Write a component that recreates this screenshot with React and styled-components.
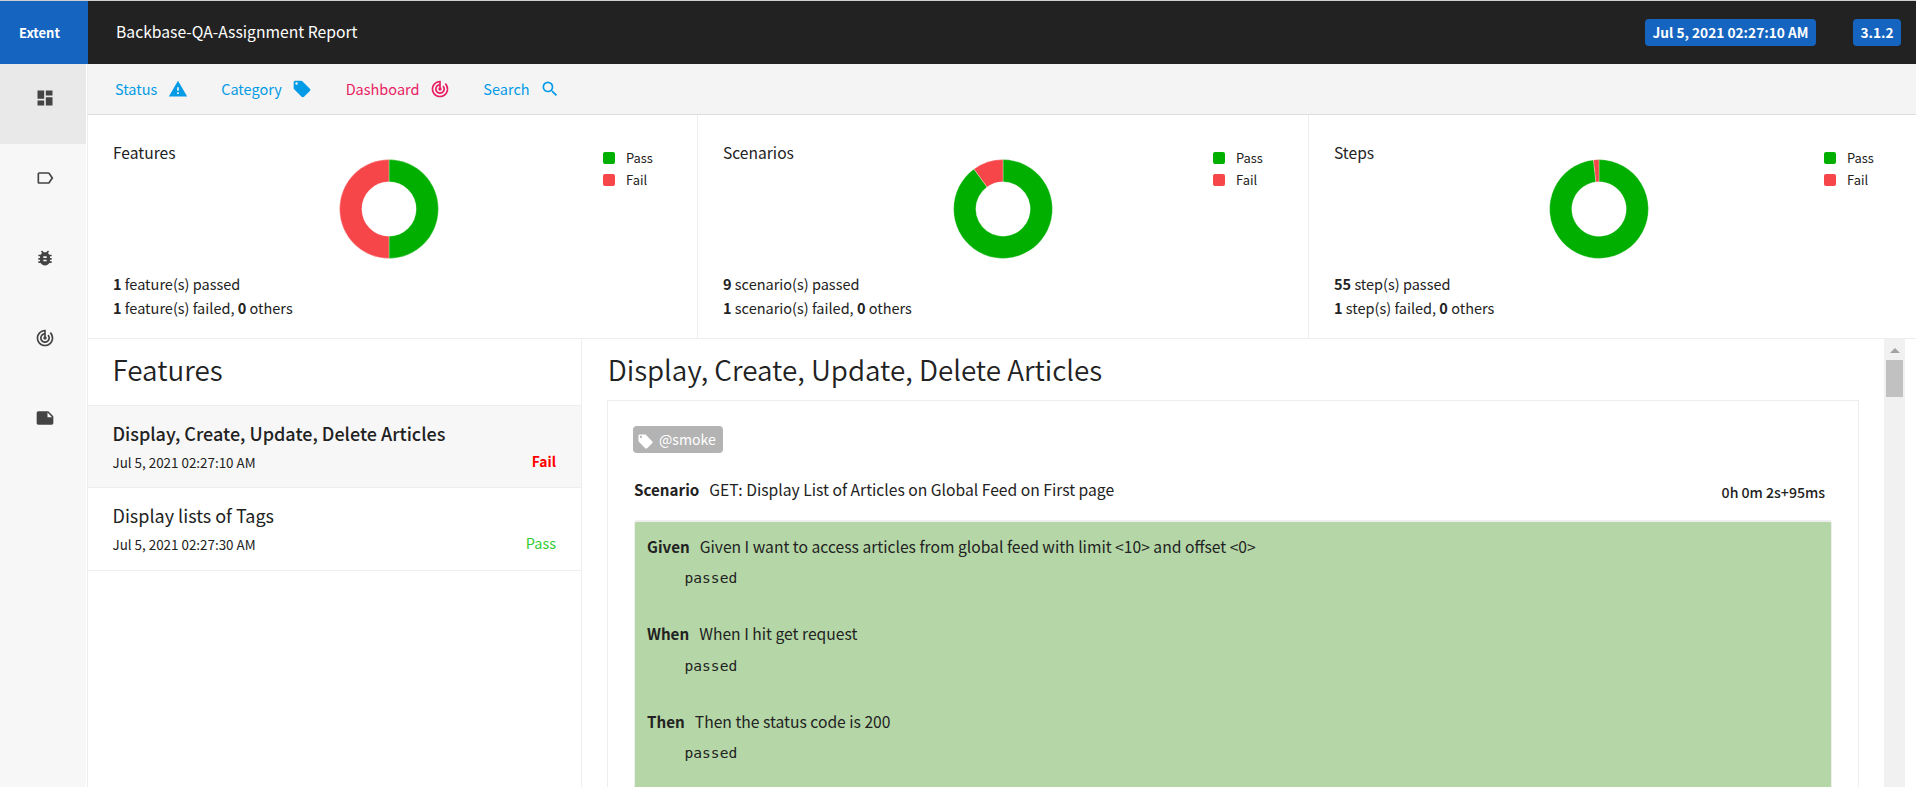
import React from "react";
import styled, { createGlobalStyle } from "styled-components";
import {
  MdDashboard,
  MdLabelOutline,
  MdBugReport,
  MdTrackChanges,
  MdNote,
  MdWarning,
  MdLocalOffer,
  MdSearch,
} from "react-icons/md";

const GlobalStyle = createGlobalStyle`
  *, *::before, *::after { box-sizing: border-box; }
  html, body { margin: 0; padding: 0; height: 100%; overflow: hidden; }
  body {
    background: #fff;
    color: #222;
    font-family: "Noto Sans CJK SC", "Noto Sans", sans-serif;
    font-size: 14px;
    white-space: nowrap;
  }
`;

const Page = styled.div`
  display: flex;
  flex-direction: column;
  width: 1916px;
  height: 787px;
  overflow: hidden;
`;

const Header = styled.header`
  display: flex;
  flex: none;
  height: 64px;
  border-top: 1px solid #cdd0cf;
  background: #222;
  color: #fff;
`;

const Brand = styled.div`
  width: 88px;
  padding: 19px 0 0 19px;
  background: #1565c0;
  font-size: 13px;
  font-weight: 700;
  line-height: 26px;
`;

const ReportName = styled.div`
  flex: 1;
  padding: 19px 0 0 28px;
  font-size: 15.7px;
  line-height: 24px;
`;

const Badge = styled.span`
  align-self: flex-start;
  height: 27px;
  margin-top: 18px;
  margin-right: ${(p) => p.$after}px;
  padding: 0 7.5px;
  border-radius: 4px;
  background: #1565c0;
  font-size: 13.7px;
  font-weight: 700;
  line-height: 26px;
`;

const Body = styled.div`
  display: flex;
  flex: 1;
  min-height: 0;
`;

const Sidebar = styled.aside`
  flex: none;
  width: 87px;
  border-right: 1px solid #fff;
  background: #f7f7f7;
`;

const SideItem = styled.div`
  display: flex;
  justify-content: center;
  height: 80px;
  padding: 24px 0 0 4px;
  background: ${(p) => (p.$active ? "#e9e9e9" : "transparent")};
  color: #444;
  font-size: 20px;
`;

const Main = styled.main`
  display: flex;
  flex: 1;
  flex-direction: column;
  min-width: 0;
`;

const Toolbar = styled.nav`
  display: flex;
  flex: none;
  gap: 33.5px;
  height: 51px;
  padding-left: 27px;
  border-bottom: 1px solid #ddd;
  border-left: 1px solid #eee;
  background: #f4f4f4;
`;

const ToolLink = styled.a`
  display: flex;
  align-items: center;
  gap: 10.3px;
  padding-bottom: 2px;
  color: ${(p) => (p.$active ? "#e91e63" : "#039be5")};
  font-size: 14.5px;

  svg { margin-top: 1px; font-size: 20px; }
`;

const Cards = styled.section`
  display: grid;
  flex: none;
  grid-template-columns: 610px 611px 1fr;
  height: 224px;
  border-bottom: 1px solid #eee;
`;

const Card = styled.div`
  padding: 28px 0 0 25px;
  border-left: 1px solid #eee;
`;

const CardTop = styled.div`
  display: flex;
  width: 566px;
  height: 129px;
`;

const CardTitle = styled.div`
  font-size: 15.6px;
  line-height: 18px;
`;

const ChartArea = styled.div`
  display: flex;
  flex: 1;
  justify-content: center;
  padding-top: 16px;
`;

const Legend = styled.div`
  width: 76px;
  padding-top: 4px;
`;

const LegendRow = styled.div`
  display: flex;
  align-items: center;
  gap: 11px;
  height: 22px;
  font-size: 12.9px;
  line-height: 20px;

  &::before {
    content: "";
    width: 12px;
    height: 12px;
    border-radius: 2px;
    background: ${(p) => p.$color};
  }
`;

const Stat = styled.div`
  font-size: 14.5px;
  line-height: 24px;
`;

const Content = styled.div`
  display: flex;
  flex: 1;
  min-height: 0;
`;

const FeatureList = styled.section`
  flex: none;
  width: 495px;
  border-right: 1px solid #eee;
  border-left: 1px solid #eee;
`;

const ListHeading = styled.h1`
  height: 67px;
  margin: 0;
  padding: 12px 0 0 24.5px;
  border-bottom: 1px solid #eee;
  font-size: 27.8px;
  font-weight: 350;
  line-height: 36px;
`;

const Feature = styled.div`
  height: ${(p) => (p.$active ? 82 : 83)}px;
  padding: 14.5px 25px 0 24.5px;
  border-bottom: 1px solid #eee;
  background: ${(p) => (p.$active ? "#f7f7f7" : "#fff")};
`;

const FeatureName = styled.div`
  font-size: 18px;
  font-weight: ${(p) => (p.$active ? 500 : 400)};
  line-height: 24px;
`;

const FeatureMeta = styled.div`
  display: flex;
  justify-content: space-between;
  padding-top: 7px;
  line-height: 20px;
  font-size: 13.4px;
`;

const Outcome = styled.span`
  color: ${(p) => (p.$failed ? "#f00" : "#32cd32")};
  font-size: ${(p) => (p.$failed ? 13.8 : 14.5)}px;
  font-weight: ${(p) => (p.$failed ? 700 : 400)};
  line-height: ${(p) => (p.$failed ? 19 : 18)}px;
`;

const Detail = styled.section`
  flex: 1;
  min-width: 0;
  padding: 12px 25px 0 25px;
  overflow: hidden;
`;

const DetailHeading = styled.h2`
  height: 49px;
  margin: 0;
  padding-left: 0.7px;
  font-size: 27.8px;
  font-weight: 350;
  line-height: 36px;
`;

const Panel = styled.div`
  height: 600px;
  padding: 25px 26px 0 25px;
  border: 1px solid #eee;
`;

const Tag = styled.div`
  display: flex;
  align-items: center;
  gap: 5px;
  width: fit-content;
  height: 27px;
  padding: 0 7px 0 4px;
  border-radius: 4px;
  background: #b3b3b3;
  color: #fff;
  font-size: 14.1px;
  line-height: 25px;

  svg { margin-top: 3px; font-size: 17px; }
`;

const ScenarioRow = styled.div`
  display: flex;
  justify-content: space-between;
  height: 67px;
  padding: 23.5px 7px 0 1px;
  font-size: 15.66px;
  line-height: 24px;
`;

const Keyword = styled.span`
  margin-right: 10px;
  font-size: 15.2px;
  font-weight: 700;
`;

const Duration = styled.span`
  padding-top: 3.5px;
  font-size: 14.1px;
  font-weight: 500;
`;

const Steps = styled.div`
  height: 500px;
  margin-left: 1px;
  padding: 11.8px 12px 0;
  border: 1px solid #eee;
  border-top-width: 2px;
  border-radius: 3px;
  background: #b5d7a7;
`;

const Step = styled.div`
  height: 87.5px;
  font-size: 15.66px;
  line-height: 24px;
`;

const StepLog = styled.pre`
  margin: 7.5px 0 0 37.5px;
  font-family: "DejaVu Sans Mono", monospace;
  font-size: 14.6px;
  line-height: 24px;
`;

const ScrollTrack = styled.div`
  display: flex;
  flex: none;
  flex-direction: column;
  align-items: center;
  width: 21px;
  margin-right: 11px;
  background: #f1f1f1;
`;

const ScrollArrow = styled.div`
  margin: 9px 0 7px;
  border: 5px solid transparent;
  border-top-width: 0;
  border-bottom-color: #a3a3a3;
`;

const ScrollThumb = styled.div`
  width: 17px;
  height: 37px;
  background: #c1c1c1;
`;

const PASS = "#00af00";
const FAIL = "#f7464a";

function Donut({ passed, failed }) {
  const c = 50;
  const R = 49.4;
  const r = 27.2;
  const split = (passed / (passed + failed)) * Math.PI * 2;
  const at = (radius, a) => `${c + radius * Math.sin(a)} ${c - radius * Math.cos(a)}`;
  const slice = (from, to) => {
    const large = to - from > Math.PI ? 1 : 0;
    return `M${at(R, from)}A${R} ${R} 0 ${large} 1 ${at(R, to)}L${at(r, to)}A${r} ${r} 0 ${large} 0 ${at(r, from)}Z`;
  };
  return (
    <svg width="100" height="100" viewBox="0 0 100 100">
      <path d={slice(0, split)} fill={PASS} stroke="#fff" strokeWidth="0.3" />
      <path d={slice(split, Math.PI * 2)} fill={FAIL} stroke="#fff" strokeWidth="0.3" />
    </svg>
  );
}

const sideIcons = [MdDashboard, MdLabelOutline, MdBugReport, MdTrackChanges, MdNote];

const tools = [
  { label: "Status", Icon: MdWarning },
  { label: "Category", Icon: MdLocalOffer },
  { label: "Dashboard", Icon: MdTrackChanges, active: true },
  { label: "Search", Icon: MdSearch },
];

const summaries = [
  { title: "Features", unit: "feature(s)", passed: 1, failed: 1 },
  { title: "Scenarios", unit: "scenario(s)", passed: 9, failed: 1 },
  { title: "Steps", unit: "step(s)", passed: 55, failed: 1 },
];

const features = [
  { name: "Display, Create, Update, Delete Articles", time: "Jul 5, 2021 02:27:10 AM", outcome: "Fail", active: true },
  { name: "Display lists of Tags", time: "Jul 5, 2021 02:27:30 AM", outcome: "Pass" },
];

const steps = [
  { keyword: "Given", text: "Given I want to access articles from global feed with limit <10> and offset <0>" },
  { keyword: "When", text: "When I hit get request" },
  { keyword: "Then", text: "Then the status code is 200" },
];

export default function App() {
  return (
    <Page>
      <GlobalStyle />
      <Header>
        <Brand>Extent</Brand>
        <ReportName>Backbase-QA-Assignment Report</ReportName>
        <Badge $after={37}>Jul 5, 2021 02:27:10 AM</Badge>
        <Badge $after={15}>3.1.2</Badge>
      </Header>
      <Body>
        <Sidebar>
          {sideIcons.map((Icon, i) => (
            <SideItem key={i} $active={i === 0}>
              <Icon />
            </SideItem>
          ))}
        </Sidebar>
        <Main>
          <Toolbar>
            {tools.map(({ label, Icon, active }) => (
              <ToolLink key={label} $active={active}>
                {label}
                <Icon />
              </ToolLink>
            ))}
          </Toolbar>
          <Cards>
            {summaries.map(({ title, unit, passed, failed }) => (
              <Card key={title}>
                <CardTop>
                  <CardTitle>{title}</CardTitle>
                  <ChartArea>
                    <Donut passed={passed} failed={failed} />
                  </ChartArea>
                  <Legend>
                    <LegendRow $color={PASS}>Pass</LegendRow>
                    <LegendRow $color={FAIL}>Fail</LegendRow>
                  </Legend>
                </CardTop>
                <Stat><b>{passed}</b> {unit} passed</Stat>
                <Stat><b>{failed}</b> {unit} failed, <b>0</b> others</Stat>
              </Card>
            ))}
          </Cards>
          <Content>
            <FeatureList>
              <ListHeading>Features</ListHeading>
              {features.map(({ name, time, outcome, active }) => (
                <Feature key={name} $active={active}>
                  <FeatureName $active={active}>{name}</FeatureName>
                  <FeatureMeta>
                    <span>{time}</span>
                    <Outcome $failed={outcome === "Fail"}>{outcome}</Outcome>
                  </FeatureMeta>
                </Feature>
              ))}
            </FeatureList>
            <Detail>
              <DetailHeading>Display, Create, Update, Delete Articles</DetailHeading>
              <Panel>
                <Tag><MdLocalOffer /><span>@smoke</span></Tag>
                <ScenarioRow>
                  <div>
                    <Keyword>Scenario</Keyword>
                    GET: Display List of Articles on Global Feed on First page
                  </div>
                  <Duration>0h 0m 2s+95ms</Duration>
                </ScenarioRow>
                <Steps>
                  {steps.map(({ keyword, text }) => (
                    <Step key={keyword}>
                      <Keyword>{keyword}</Keyword>
                      {text}
                      <StepLog>passed</StepLog>
                    </Step>
                  ))}
                </Steps>
              </Panel>
            </Detail>
            <ScrollTrack>
              <ScrollArrow />
              <ScrollThumb />
            </ScrollTrack>
          </Content>
        </Main>
      </Body>
    </Page>
  );
}
